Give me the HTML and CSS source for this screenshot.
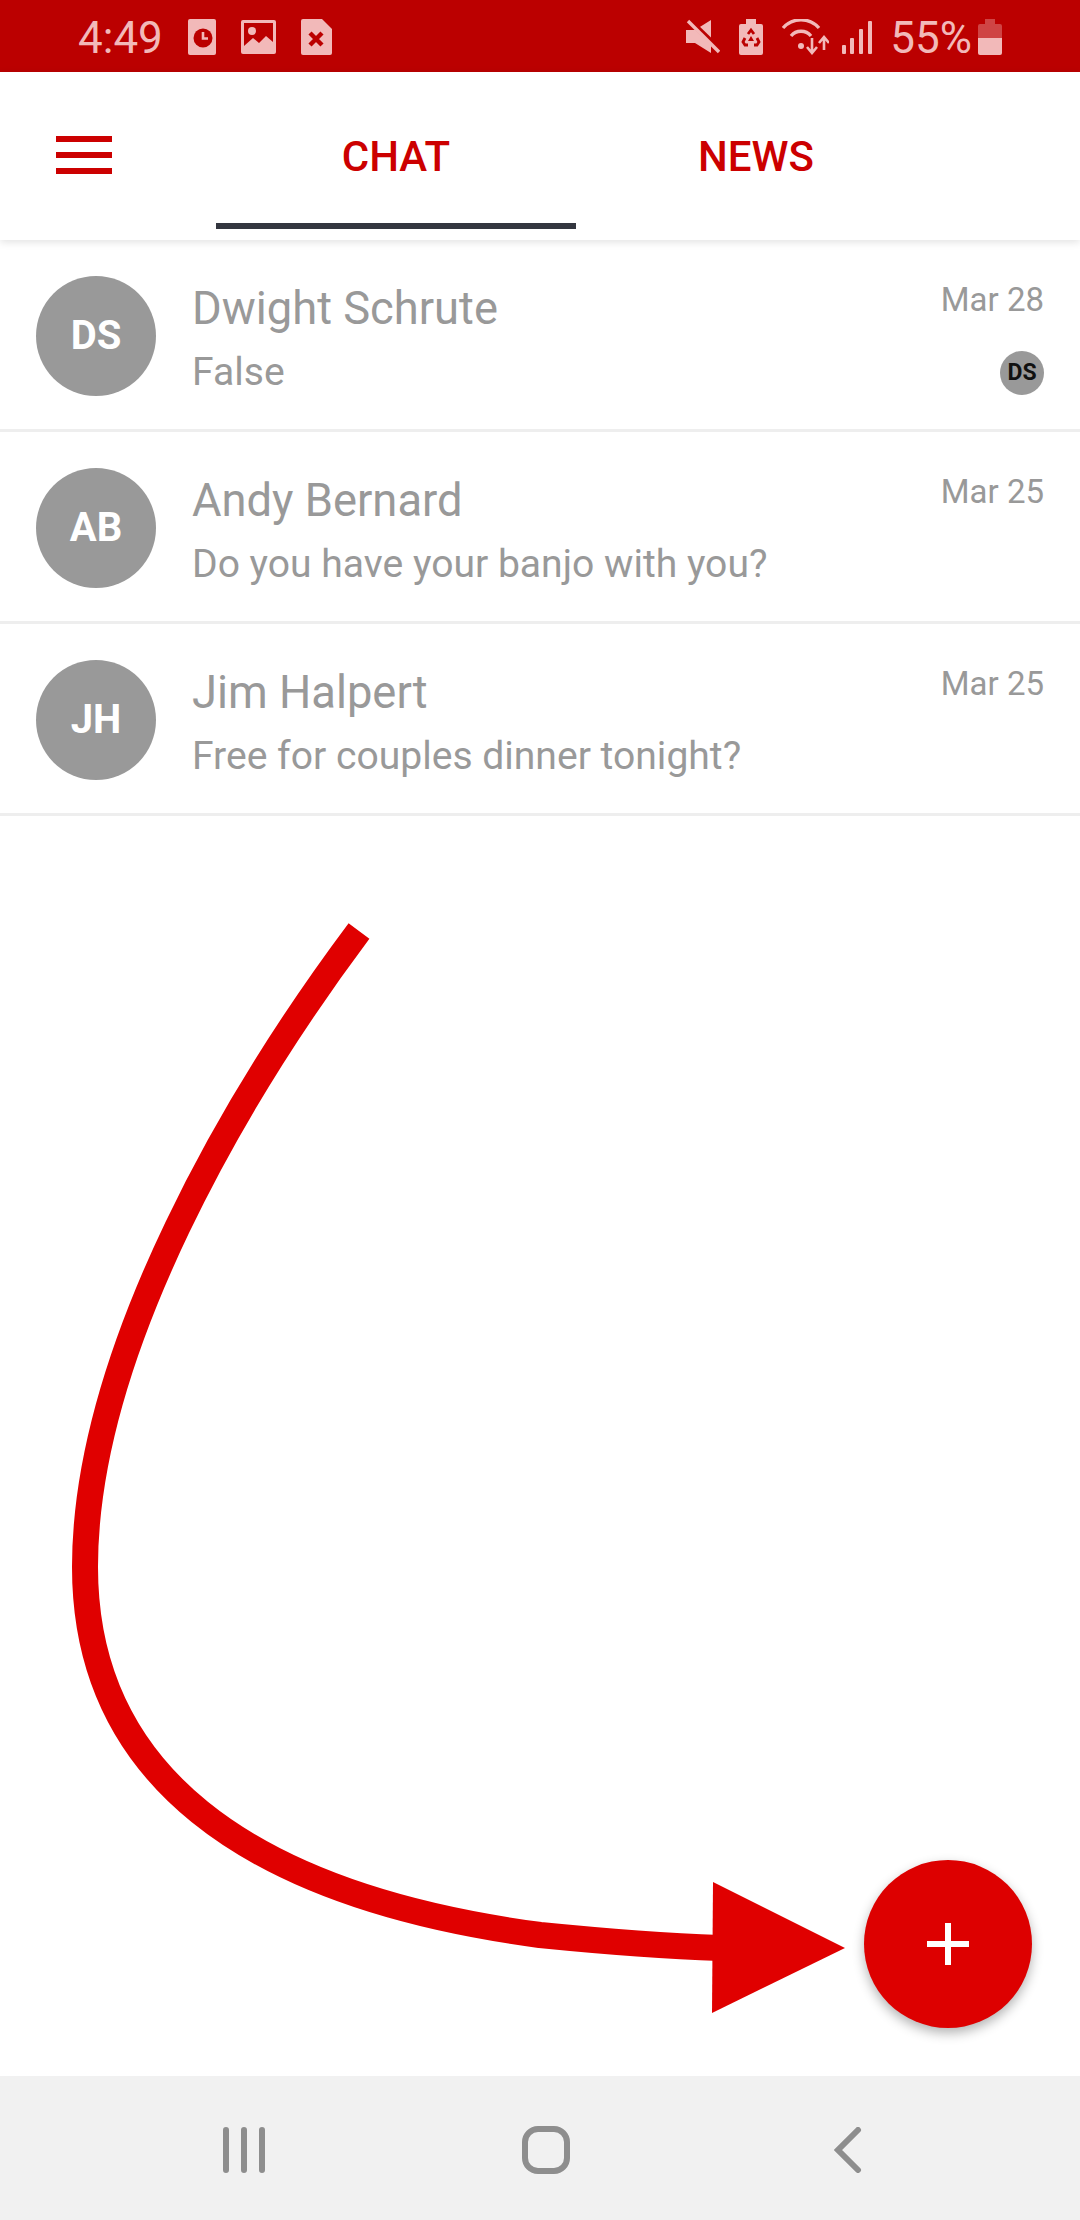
FILE: index.html
```html
<!DOCTYPE html>
<html lang="en">
<head>
  <meta charset="UTF-8">
  <title>Chat</title>
  <link rel="stylesheet" href="styles.css">
</head>
<body>
  <div id="screen">
    <!-- Status bar -->
    <div class="status-bar">
      <span class="status-text">4:49</span>
      <svg class="st-clock" width="28" height="36" viewBox="0 0 28 36">
        <rect width="28" height="36" rx="2" fill="#f2b9b9"/>
        <circle cx="15" cy="19" r="9.500" fill="#bb0000"/>
        <path d="M15 13v6.500h5" fill="none" stroke="#f2b9b9" stroke-width="2.600"/>
      </svg>
      <svg class="st-image" width="35" height="34" viewBox="0 0 35 34">
        <rect width="35" height="34" rx="2" fill="#f2b9b9"/>
        <rect x="3" y="3" width="29" height="25" fill="#bb0000"/>
        <circle cx="11" cy="11" r="4" fill="#f2b9b9"/>
        <path d="M3 26l9-8 6 5 7-7 7 6v10H3z" fill="#f2b9b9"/>
      </svg>
      <svg class="st-file" width="31" height="36" viewBox="0 0 31 36">
        <path d="M2 0h19l10 10v24a2 2 0 0 1-2 2H2a2 2 0 0 1-2-2V2a2 2 0 0 1 2-2z" fill="#f2b9b9"/>
        <path d="M9 14l12 12M21 14L9 26" stroke="#bb0000" stroke-width="4.400"/>
      </svg>
      <span class="status-spacer"></span>
      <svg class="st-mute" width="34" height="36" viewBox="0 0 34 36">
        <path d="M0 11h9L25 1v33L9 24H0z" fill="#f2b9b9"/>
        <path d="M2 0l33 32" stroke="#bb0000" stroke-width="5.500"/>
        <path d="M2 2l31 31" stroke="#f2b9b9" stroke-width="3.400"/>
      </svg>
      <svg class="st-saver" width="24" height="36" viewBox="0 0 24 36">
        <path d="M7 0h10v5h5a2 2 0 0 1 2 2v27a2 2 0 0 1-2 2H2a2 2 0 0 1-2-2V7a2 2 0 0 1 2-2h5z" fill="#f2b9b9"/>
        <path d="M9 15l3-4 3 4M18 19l2 4-2 3h-3M6 19l-2 4 2 3h3" fill="none" stroke="#bb0000" stroke-width="2.800"/>
        <path d="M12 17l3 5H9z" fill="#bb0000"/>
      </svg>
      <svg class="st-wifi" width="48" height="36" viewBox="0 0 48 36">
        <path d="M2 9A24 24 0 0 1 38 9M10 17A13 13 0 0 1 30 17" fill="none" stroke="#f2b9b9" stroke-width="3.400"/>
        <circle cx="20" cy="27" r="3" fill="#f2b9b9"/>
        <path d="M31 19v14M26 28l5 6 5-6" fill="none" stroke="#f2b9b9" stroke-width="2.600"/>
        <path d="M43 31V19M38 24l5-6 5 6" fill="none" stroke="#f2b9b9" stroke-width="2.600"/>
      </svg>
      <svg class="st-signal" width="30" height="34" viewBox="0 0 30 34">
        <rect x="0" y="25" width="4" height="9" rx="1" fill="#f2b9b9"/>
        <rect x="8" y="18" width="4" height="16" rx="1" fill="#f2b9b9"/>
        <rect x="17" y="9" width="4" height="25" rx="1" fill="#f2b9b9"/>
        <rect x="26" y="1" width="4" height="33" rx="1" fill="#f2b9b9"/>
      </svg>
      <span class="status-text st-percent">55%</span>
      <svg class="st-battery" width="24" height="36" viewBox="0 0 24 36">
        <path d="M7 0h10v5h5a2 2 0 0 1 2 2v12H0V7a2 2 0 0 1 2-2h5z" fill="#cf4444"/>
        <path d="M0 19h24v15a2 2 0 0 1-2 2H2a2 2 0 0 1-2-2z" fill="#f2b9b9"/>
      </svg>
    </div>

    <!-- Tabs -->
    <div class="top-bar">
      <div class="menu-cell">
        <div class="menu-icon"><span></span><span></span><span></span></div>
      </div>
      <div class="tab active">CHAT</div>
      <div class="tab">NEWS</div>
    </div>

    <!-- Chat list -->
    <div class="chat-list">
      <div class="chat-row">
        <div class="avatar">DS</div>
        <div class="chat-body">
          <div class="chat-name">Dwight Schrute</div>
          <div class="chat-msg">False</div>
        </div>
        <div class="chat-side">
          <div class="chat-date">Mar 28</div>
          <div class="read-badge">DS</div>
        </div>
      </div>
      <div class="chat-row">
        <div class="avatar">AB</div>
        <div class="chat-body">
          <div class="chat-name">Andy Bernard</div>
          <div class="chat-msg">Do you have your banjo with you?</div>
        </div>
        <div class="chat-side">
          <div class="chat-date">Mar 25</div>
        </div>
      </div>
      <div class="chat-row">
        <div class="avatar">JH</div>
        <div class="chat-body">
          <div class="chat-name">Jim Halpert</div>
          <div class="chat-msg">Free for couples dinner tonight?</div>
        </div>
        <div class="chat-side">
          <div class="chat-date">Mar 25</div>
        </div>
      </div>
    </div>

    <!-- Android nav bar -->
    <div class="nav-bar">
      <svg width="42" height="46" viewBox="0 0 42 46">
        <path d="M3 3v40M21 3v40M39 3v40" stroke="#8e8e8e" stroke-width="6" stroke-linecap="round"/>
      </svg>
      <svg class="nav-home" width="48" height="48" viewBox="0 0 48 48">
        <rect x="3" y="3" width="42" height="42" rx="13" fill="none" stroke="#8e8e8e" stroke-width="6"/>
      </svg>
      <svg width="28" height="46" viewBox="0 0 28 46">
        <path d="M24 3L4 23l20 20" fill="none" stroke="#8e8e8e" stroke-width="6" stroke-linecap="round"/>
      </svg>
    </div>

    <!-- Hand drawn arrow on top of the screenshot -->
    <svg class="annotation" width="1080" height="2220" viewBox="0 0 1080 2220">
      <path d="M359 931C240 1090 85 1350 85 1567C85 1770 240 1895 540 1935C600 1941 660 1946 720 1948" fill="none" stroke="#e00000" stroke-width="26"/>
      <path d="M713 1882L845 1948L712 2013z" fill="#e00000"/>
    </svg>

    <div class="fab">
      <svg width="42" height="42" viewBox="0 0 42 42">
        <path d="M21 0v42M0 21h42" stroke="#fff" stroke-width="6"/>
      </svg>
    </div>
  </div>
</body>
</html>
```

FILE: styles.css
```css
body {
  margin: 0;
  font-family: Roboto, sans-serif;
  background-color: #fff;
}
#screen {
  position: relative;
  width: 1080px;
  height: 2220px;
  display: flex;
  flex-direction: column;
  overflow: hidden;
}
.status-bar {
  height: 72px;
  flex: none;
  box-sizing: border-box;
  display: flex;
  align-items: center;
  padding: 2px 78px 0;
  background-color: #bb0000;
}
.status-text {
  font-size: 44px;
  line-height: 60px;
  margin-top: 2px;
  color: #f2b9b9;
}
.status-spacer {
  flex: 1;
}
.st-clock,
.st-image,
.st-file {
  margin-left: 25px;
}
.st-saver {
  margin-left: 19px;
}
.st-wifi {
  margin-left: 18px;
}
.st-signal {
  margin-left: 13px;
}
.st-percent {
  margin-left: 18px;
}
.st-battery {
  margin-left: 6px;
}
.top-bar {
  position: relative;
  height: 168px;
  flex: none;
  display: flex;
  background-color: #fff;
  box-shadow: 0 2px 8px rgba(0, 0, 0, 0.12);
}
.menu-cell {
  width: 216px;
  padding: 64px 0 0 56px;
  box-sizing: border-box;
}
.menu-icon {
  width: 56px;
  display: flex;
  flex-direction: column;
  gap: 10px;
}
.menu-icon span {
  height: 6px;
  background-color: #cc0000;
}
.tab {
  width: 360px;
  box-sizing: border-box;
  padding-top: 61px;
  border-bottom: 6px solid transparent;
  margin-bottom: 11px;
  text-align: center;
  font-size: 42px;
  line-height: 48px;
  font-weight: 500;
  color: #cc0000;
}
.tab.active {
  border-bottom-color: #33363f;
}
.chat-list {
  flex: 1;
}
.chat-row {
  height: 192px;
  box-sizing: border-box;
  display: flex;
  padding: 36px 36px 0 36px;
  border-bottom: 3px solid #eeeeee;
}
.avatar {
  width: 120px;
  height: 120px;
  flex: none;
  border-radius: 50%;
  background-color: #999;
  color: #fff;
  font-size: 40px;
  font-weight: 700;
  line-height: 120px;
  text-align: center;
}
.chat-body {
  flex: 1;
  margin-left: 36px;
  color: #999;
}
.chat-name {
  font-size: 45.300px;
  line-height: 50px;
  margin-top: 8px;
}
.chat-msg {
  font-size: 39.100px;
  line-height: 44px;
  margin-top: 16px;
}
.chat-side {
  display: flex;
  flex-direction: column;
  align-items: flex-end;
}
.chat-date {
  font-size: 33px;
  line-height: 40px;
  margin-top: 4px;
  color: #999;
}
.read-badge {
  width: 44px;
  height: 44px;
  margin-top: 31px;
  border-radius: 50%;
  background-color: #999;
  color: #111;
  font-size: 23px;
  font-weight: 700;
  line-height: 44px;
  text-align: center;
}
.nav-bar {
  height: 144px;
  flex: none;
  box-sizing: border-box;
  display: flex;
  align-items: center;
  background-color: #f1f1f1;
  padding: 4px 0 0 223px;
}
.nav-home {
  margin: 0 264px 0 257px;
}
.annotation {
  position: absolute;
  left: 0;
  top: 0;
  pointer-events: none;
}
.fab {
  position: absolute;
  left: 864px;
  top: 1860px;
  width: 168px;
  height: 168px;
  border-radius: 50%;
  background-color: #dd0000;
  box-shadow: 0 5px 12px rgba(0, 0, 0, 0.3);
  display: flex;
  align-items: center;
  justify-content: center;
}
```
